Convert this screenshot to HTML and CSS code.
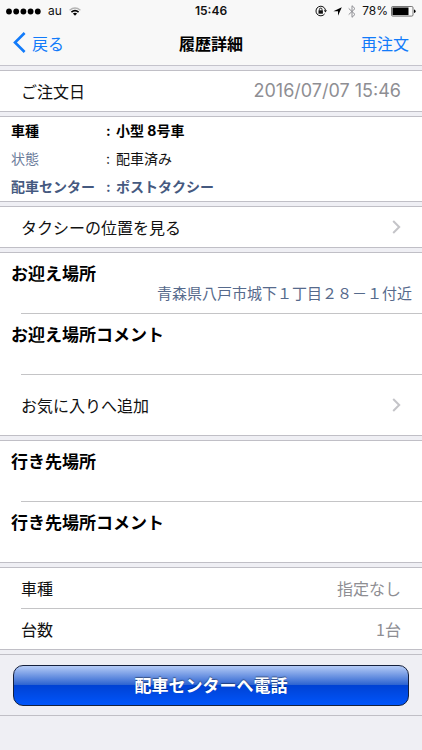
FILE: index.html
```html
<!DOCTYPE html>
<html lang="ja">
<head>
  <meta charset="UTF-8">
  <meta name="viewport" content="width=device-width, initial-scale=1.0">
  <title>履歴詳細</title>
  <link rel="stylesheet" href="styles.css">
</head>
<body>
  <header class="header">
    <div class="status-bar">
      <div class="status-left">
        <svg class="signal" width="35" height="7" viewBox="0 0 35 7" aria-hidden="true">
          <circle cx="3" cy="3.5" r="2.9"/>
          <circle cx="10.2" cy="3.5" r="2.9"/>
          <circle cx="17.4" cy="3.5" r="2.9"/>
          <circle cx="24.6" cy="3.5" r="2.9"/>
          <circle cx="31.8" cy="3.5" r="2.9"/>
        </svg>
        <span>au</span>
        <svg width="12" height="9" viewBox="0 0 12 9" fill="none" aria-hidden="true">
          <path d="M.6 3.2Q6-1.4 11.4 3.2" stroke="#b4b4b4" stroke-width="1.4"/>
          <path d="M2.4 5.1Q6 2 9.6 5.1" stroke="#000" stroke-width="1.6"/>
          <path d="M3.9 6.5Q6 4.8 8.1 6.5L6 8.8z" fill="#000"/>
        </svg>
      </div>
      <span class="clock">15:46</span>
      <div class="status-right">
        <svg width="12" height="12" viewBox="0 0 12 12" fill="none" aria-hidden="true">
          <path d="M9.7 8.8A4.8 4.8 0 1 1 10.5 5.2" stroke="#111"/>
          <path d="M8.8 5.2h3.2l-1.6 2.2z" fill="#111"/>
          <rect x="3.5" y="5.3" width="4.4" height="3.4" fill="#111"/>
          <path d="M4.4 5.5V4.4a1.3 1.3 0 0 1 2.6 0v1.1" stroke="#111" stroke-width=".9"/>
        </svg>
        <svg class="location" width="9" height="9" viewBox="0 0 9 9" aria-hidden="true">
          <path d="M8.8.2 5 8.8V4.3H.4z"/>
        </svg>
        <svg width="8" height="13" viewBox="0 0 8 13" fill="none" aria-hidden="true">
          <path d="M.7 3.4 7 9.4 4 12.3V.7l3 2.9-6.3 6" stroke="#8e8e93"/>
        </svg>
        <span>78%</span>
        <svg class="battery" width="25" height="11" viewBox="0 0 25 11" aria-hidden="true">
          <rect x=".5" y=".5" width="21.5" height="9.6" rx="1.2" fill="none" stroke="#555" stroke-width=".8"/>
          <rect x="1.5" y="1.5" width="16" height="7.6"/>
          <path d="M23 3.5q1.6.3 1.6 1.8T23 7.1z"/>
        </svg>
      </div>
    </div>
    <nav class="nav-bar">
      <a href="#" class="nav-link back">
        <svg width="13" height="21" viewBox="0 0 13 21" fill="none" aria-hidden="true">
          <path d="M11.6 1 2 10.5l9.6 9.5" stroke="#127bfa" stroke-width="2.6"/>
        </svg>
        戻る
      </a>
      <h1>履歴詳細</h1>
      <a href="#" class="nav-link reorder">再注文</a>
    </nav>
  </header>

  <main>
    <section class="group">
      <div class="row">
        <span>ご注文日</span>
        <span class="value date">2016/07/07 15:46</span>
      </div>
    </section>

    <section class="group">
      <dl class="details">
        <div class="strong">
          <dt>車種</dt>
          <dd>小型 8号車</dd>
        </div>
        <div class="state">
          <dt>状態</dt>
          <dd>配車済み</dd>
        </div>
        <div class="strong center-name">
          <dt>配車センター</dt>
          <dd>ポストタクシー</dd>
        </div>
      </dl>
    </section>

    <section class="group">
      <a href="#" class="row">
        <span>タクシーの位置を見る</span>
        <svg class="chevron" width="9" height="14" viewBox="0 0 9 14" aria-hidden="true"><path d="m1.2 1 6 6-6 6"/></svg>
      </a>
    </section>

    <section class="group">
      <div class="place">
        <h2>お迎え場所</h2>
        <p>青森県八戸市城下１丁目２８－１付近</p>
      </div>
      <div class="place divided">
        <h2>お迎え場所コメント</h2>
      </div>
      <a href="#" class="row tall divided">
        <span>お気に入りへ追加</span>
        <svg class="chevron" width="9" height="14" viewBox="0 0 9 14" aria-hidden="true"><path d="m1.2 1 6 6-6 6"/></svg>
      </a>
    </section>

    <section class="group">
      <div class="place">
        <h2>行き先場所</h2>
      </div>
      <div class="place divided">
        <h2>行き先場所コメント</h2>
      </div>
    </section>

    <section class="group">
      <div class="row">
        <span>車種</span>
        <span class="value">指定なし</span>
      </div>
      <div class="row divided">
        <span>台数</span>
        <span class="value">1台</span>
      </div>
    </section>

    <section class="group call">
      <button type="button" class="call-button">配車センターへ電話</button>
    </section>
  </main>
</body>
</html>
```

FILE: styles.css
```css
* {
  box-sizing: border-box;
}

body {
  margin: 0;
  background-color: #efeff4;
  color: #111;
  font-family: "Noto Sans CJK JP", sans-serif;
  font-size: 16px;
  line-height: 20px;
}

h1,
h2,
p,
dl,
dd {
  margin: 0;
}

a {
  color: inherit;
  text-decoration: none;
}

svg {
  flex: none;
}

.header {
  background-color: #f8f8f8;
  border-bottom: 1px solid #c4c3cc;
}

/* status bar */
.status-bar {
  display: grid;
  grid-template-columns: 1fr auto 1fr;
  align-items: center;
  height: 22px;
  padding: 0 6px;
  font-family: Inter, sans-serif;
  font-size: 12px;
}

.status-left,
.status-right {
  display: flex;
  align-items: center;
  gap: 6px;
}

.status-right {
  justify-content: flex-end;
}

.status-left {
  gap: 7px;
}

.battery {
  margin-left: -3px;
}

.clock {
  font-weight: 600;
  font-size: 12px;
}

/* navigation */
.nav-bar {
  display: grid;
  grid-template-columns: 1fr auto 1fr;
  align-items: center;
  height: 43px;
  padding: 0 13px 2px;
}

.nav-bar h1 {
  color: #000;
  font-size: 16px;
  font-weight: bold;
}

.nav-link {
  color: #127bfa;
}

.back {
  display: flex;
  align-items: center;
  gap: 6px;
}

.reorder {
  text-align: right;
}

/* grouped lists */
.group {
  margin-top: 4px;
  background-color: #fff;
  border-top: 1px solid #c0bfc6;
  border-bottom: 1px solid #c0bfc6;
}

.row {
  display: flex;
  align-items: center;
  justify-content: space-between;
  height: 40px;
  padding: 0 21px;
}

.row.tall {
  height: 60px;
}

.value {
  color: #8e8e93;
}

.date {
  font-family: Inter, sans-serif;
  font-size: 18px;
}

.chevron {
  fill: none;
  stroke: #c4c4c8;
  stroke-width: 2;
}

/* inset separator above the row */
.divided {
  background: linear-gradient(#c4c4c6, #c4c4c6) 21px 0 / 100% 1px no-repeat;
  border-top: 1px solid transparent;
  background-origin: border-box;
  box-sizing: content-box;
}

.details {
  padding: 0 11px;
  font-family: Inter, "Noto Sans CJK JP", sans-serif;
  font-size: 14px;
  line-height: 28px;
}

.details div {
  display: flex;
}

.details dt {
  width: 95px;
}

.details dd::before {
  content: ":";
  display: inline-block;
  width: 10px;
}

.strong {
  color: #000;
  font-weight: bold;
}

.state dt {
  color: #6b7c9b;
}

.center-name {
  color: #45597f;
}

.place {
  min-height: 60px;
  padding: 10px 10px 0 11px;
}

.place.divided {
  min-height: 50px;
}

.place h2 {
  color: #000;
  font-size: 17px;
  font-weight: bold;
}

.place p {
  color: #566a8c;
  font-size: 15px;
  text-align: right;
}

.call {
  padding: 10px 13px 9px;
  background-color: #efeff4;
}

.call-button {
  display: block;
  width: 100%;
  height: 41px;
  padding: 0 0 3px;
  border: 1px solid #15203c;
  border-radius: 10px;
  background: linear-gradient(#b5cbf6, #2b62d0 49%, #0042d4 50%, #0055fb);
  color: #fff;
  font-family: inherit;
  font-size: 17px;
  font-weight: bold;
  text-shadow: 0 -1px 1px rgba(0, 0, 0, 0.4);
  cursor: pointer;
}
```
